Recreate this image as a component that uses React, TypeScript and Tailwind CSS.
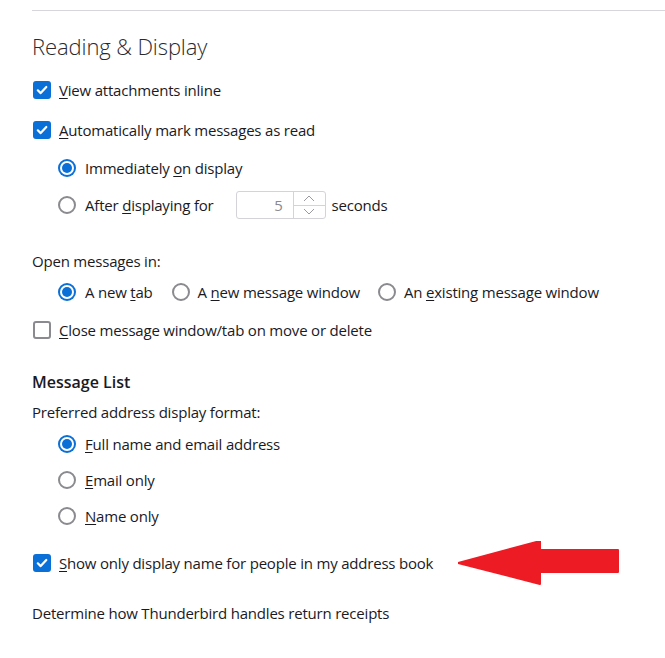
import React from 'react';

const font = { fontFamily: '"Open Sans", "Liberation Sans", sans-serif' };

function Check({ checked }: { checked?: boolean }) {
  if (!checked) {
    return <span className="block w-[18px] h-[18px] rounded-[3px] border-2 border-[#8a8a8f] bg-white shrink-0" />;
  }
  return (
    <span className="flex items-center justify-center w-[18px] h-[18px] rounded-[3px] bg-[#0a6fd6] shrink-0">
      <svg width="12" height="12" viewBox="0 0 12 12" fill="none">
        <path d="M1.8 6.3 L4.7 9.1 L10.3 3" stroke="white" strokeWidth="2.2" strokeLinecap="round" strokeLinejoin="round" />
      </svg>
    </span>
  );
}

function Radio({ checked }: { checked?: boolean }) {
  if (!checked) {
    return <span className="block w-[18px] h-[18px] rounded-full border-2 border-[#8a8a8f] bg-white shrink-0" />;
  }
  return (
    <span className="flex items-center justify-center w-[18px] h-[18px] rounded-full bg-[#0a6fd6] shrink-0">
      <span className="flex items-center justify-center w-[14px] h-[14px] rounded-full bg-white">
        <span className="block w-[10px] h-[10px] rounded-full bg-[#0a6fd6]" />
      </span>
    </span>
  );
}

function Key({ children }: { children: React.ReactNode }) {
  return <span className="underline underline-offset-2 decoration-1">{children}</span>;
}

function Row({ children, className = '' }: { children: React.ReactNode; className?: string }) {
  return <div className={`flex items-center h-[28px] ${className}`}>{children}</div>;
}

export default function App() {
  return (
    <div className="w-[665px] h-[658px] bg-white text-[#1a1a1f] text-[15px] tracking-[-0.2px] overflow-hidden" style={font}>
      <div className="mt-[10px] ml-[32px] border-t border-[#d7d7db]" />
      <div className="pl-[32px]">
        <h1 className="mt-[21px] h-[28px] leading-[28px] text-[22px] font-light text-[#2a2a2e] tracking-[-0.1px]">Reading &amp; Display</h1>

        <Row className="mt-[16px] gap-[8px] pl-[1px]">
          <Check checked />
          <span><Key>V</Key>iew attachments inline</span>
        </Row>
        <Row className="mt-[12px] gap-[8px] pl-[1px]">
          <Check checked />
          <span><Key>A</Key>utomatically mark messages as read</span>
        </Row>

        <div className="pl-[26px]">
          <Row className="mt-[10px] gap-[9px]">
            <Radio checked />
            <span>Immediately <Key>o</Key>n display</span>
          </Row>
          <Row className="mt-[9px] gap-[9px]">
            <Radio />
            <span>After <Key>d</Key>isplaying for</span>
            <div className="ml-[13px] flex h-[28px] w-[90px] rounded-[3px] border border-[#d4d4d8] bg-white">
              <span className="flex-1 flex items-center justify-end pr-[10px] text-[#8a8a8f]">5</span>
              <div className="flex flex-col w-[32px] border-l border-[#d4d4d8]">
                <span className="flex-1 flex items-center justify-center border-b border-[#d4d4d8]">
                  <svg width="12" height="7" viewBox="0 0 12 7"><path d="M1 6 L6 1 L11 6" stroke="#9a9aa0" strokeWidth="1" fill="none" /></svg>
                </span>
                <span className="flex-1 flex items-center justify-center">
                  <svg width="12" height="7" viewBox="0 0 12 7"><path d="M1 1 L6 6 L11 1" stroke="#9a9aa0" strokeWidth="1" fill="none" /></svg>
                </span>
              </div>
            </div>
            <span className="ml-[-3px]">seconds</span>
          </Row>
        </div>

        <Row className="mt-[28px]">Open messages in:</Row>
        <Row className="mt-[3px] pl-[26px]">
          <Radio checked />
          <span className="ml-[9px]">A new <Key>t</Key>ab</span>
          <span className="ml-[19px]"><Radio /></span>
          <span className="ml-[8px]">A <Key>n</Key>ew message window</span>
          <span className="ml-[18px]"><Radio /></span>
          <span className="ml-[8px]">An <Key>e</Key>xisting message window</span>
        </Row>
        <Row className="mt-[10px] gap-[8px] pl-[1px]">
          <Check />
          <span><Key>C</Key>lose message window/tab on move or delete</span>
        </Row>

        <Row className="mt-[24px] font-semibold text-[16px] tracking-normal">Message List</Row>
        <Row className="mt-[2px]">Preferred address display format:</Row>
        <div className="pl-[26px]">
          <Row className="mt-[4px] gap-[9px]">
            <Radio checked />
            <span><Key>F</Key>ull name and email address</span>
          </Row>
          <Row className="mt-[8px] gap-[9px]">
            <Radio />
            <span><Key>E</Key>mail only</span>
          </Row>
          <Row className="mt-[8px] gap-[9px]">
            <Radio />
            <span><Key>N</Key>ame only</span>
          </Row>
        </div>

        <div className="mt-[19px] flex items-center h-[28px] relative">
          <div className="flex items-center gap-[8px] pl-[1px]">
            <Check checked />
            <span><Key>S</Key>how only display name for people in my address book</span>
          </div>
          <svg className="absolute left-[426px] top-[-8px]" width="164" height="46" viewBox="0 0 164 46">
            <polygon points="0,22 82,0 82,9 160,9 160,31 82,31 82,43" fill="#ed1c24" stroke="#ed1c24" strokeWidth="2" strokeLinejoin="round" />
          </svg>
        </div>

        <Row className="mt-[22px]">Determine how Thunderbird handles return receipts</Row>
      </div>
    </div>
  );
}
